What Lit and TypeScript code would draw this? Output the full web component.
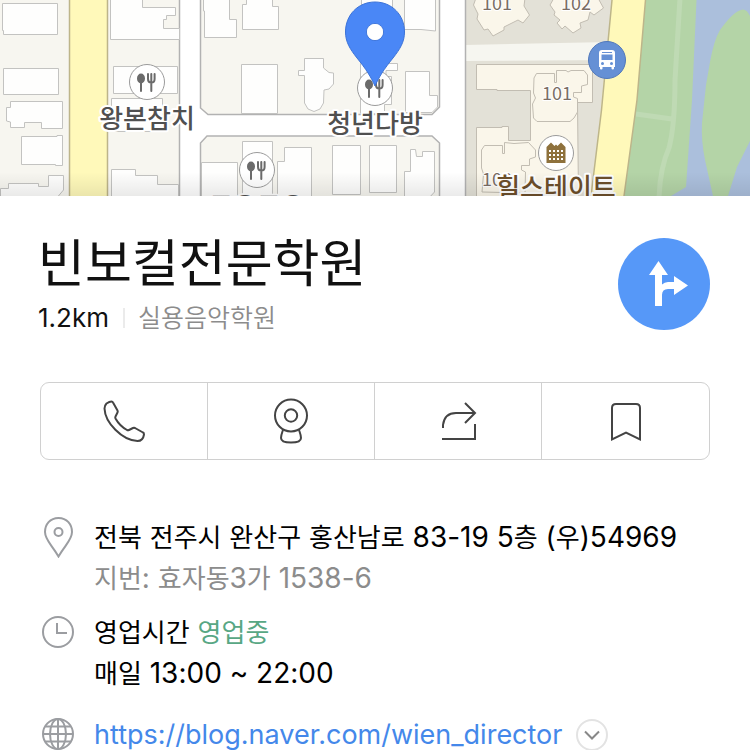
import { LitElement, html, css, svg } from "lit";
import { customElement } from "lit/decorators.js";

/* Footprints of the low buildings, as polygon point lists. */
const BUILDINGS: string[] = [
  "2.5,3.5 57.5,3.5 57.5,34.5 3.5,34.5 3.5,30.5 2.5,30.5",
  "3.5,68.5 58.5,68.5 58.5,94.5 3.5,94.5",
  "10.5,101.5 62.5,101.5 62.5,128.5 41.5,128.5 41.5,122.5 24.5,122.5 24.5,127.5 10.5,127.5 10.5,122 6.5,121 6.5,107.5 10.5,107.5",
  "21.5,136.5 57,136.5 57,135.5 62.5,135.5 62.5,165.5 55.5,165.5 55.5,164.5 21.5,164.5",
  "0.5,200 0.5,188.5 8.5,188.5 8.5,183.5 38.5,183.5 38.5,186.5 48.5,186.5 48.5,175.5 63.5,175.5 63.5,190 55,200",
  "110.5,-2 110.5,39.5 179.5,39.5 179.5,28.5 163.5,28.5 163.5,19.5 166.5,19.5 166.5,15.5 175.5,15.5 175.5,7.5 142.5,7.5 142.5,-2",
  "113.5,66.5 177.5,66.5 177.5,93.5 113.5,93.5",
  "111.5,98.5 162.5,98.5 162.5,131.5 111.5,131.5",
  "111.5,200 111.5,169.5 135.5,169.5 135.5,175.5 157.5,175.5 157.5,184.5 178.5,184.5 178.5,200",
  "203.5,-2 203.5,11 204.5,11 204.5,37.5 236.5,37.5 236.5,19.5 229.5,19.5 229.5,-2",
  "246.5,-2 246.5,4.5 242.5,4.5 242.5,29.5 278.5,29.5 278.5,6.5 272.5,6.5 272.5,-2",
  "241.5,64.5 277.5,64.5 277.5,113.5 241.5,113.5",
  "201.5,162.5 237.5,162.5 237.5,200 201.5,200",
  "242.5,141.5 272.5,141.5 272.5,200 242.5,200",
  "277.5,200 277.5,161.5 284.5,161.5 284.5,147.5 311.5,147.5 311.5,200",
  "332.5,145.5 360.5,145.5 360.5,194.5 332.5,194.5",
  "369.5,145.5 396.5,145.5 396.5,192.5 369.5,192.5",
  "404.5,200 404.5,171.5 410.5,171.5 410.5,149.5 415.5,149.5 416.5,156.5 422.5,156.5 422.5,151.5 434.5,151.5 434.5,192 427,200",
  "304.5,58.5 323.5,58.5 323.5,68 329,72.5 333.5,73 333.5,84 329,89 324,90 323.5,103 320,109 314,111.5 308,109 304.5,103 304.5,75.5 298.5,75.5 298.5,70.5 304.5,70.5",
  "361.5,-2 361.5,26.5 392.5,26.5 392.5,-2",
  "404.5,-2 404.5,29.5 421,29.5 435.5,31 435.5,-2",
  "360.5,113.5 360.5,63.5 397.5,63.5 397.5,70.5 386,70.5 386,76.5 391.5,76.5 391.5,104.5 384.5,104.5 384.5,113.5",
  "405.5,71.5 429.5,71.5 429.5,95.5 437.5,95.5 437.5,107 432,112.5 405.5,112.5",
];

/* Apartment complexes, drawn in the warmer tone. */
const APARTMENTS: string[] = [
  "476.5,64.5 592.5,64.5 592.5,102.5 577.5,102.5 578.5,200 476.5,200 476.5,127.5 502,127.5 502,126.5 508.5,126.5 508.5,140.5 530.5,140.5 530.5,90.5 497,90.5 497,89.5 476.5,89.5",
  "536.5,73.5 554.5,73.5 554.5,82.5 556.5,82.5 556.5,70.5 566,70.5 568,72 571,70.5 584,70.5 587.5,75 587.5,84.5 581.5,86 581.5,92.5 573.5,92.5 573.5,97 577.5,98.5 577.5,112 574,118 570,121.5 537,121.5 533.5,118 532.5,104 535.5,98 533.5,93 534,78",
  "484.5,145.5 502.5,145.5 502.5,153.5 504.5,153.5 504.5,142.5 514,143.5 528.5,142.5 535.5,150 535.5,157 529.5,159 529.5,165.5 521.5,165.5 521.5,170 525.5,172 525,193 482,192 483.5,174 481.5,168 481.5,150",
  "476,-2 473.5,5 478,14 477,19 484,30 488,29 493,36 504,30 504,27 518,20 523,23 529.5,15 524,6 525,-2",
  "554,-2 550,5 555,12 554,15 560,20 557,23 562,29 565,26 573,33 581,28 580,23 588,20 590,12 594,15 603.5,8 598,-2",
];

const foodMarker = (x: number, y: number) => svg`
  <g transform="translate(${x} ${y})">
    <circle class="spot" r="17.5" />
    <ellipse class="spoon" cx="-6" cy="-3.500" rx="4" ry="5" />
    <path class="fork" d="M-6 0V9M1-8V-3Q1 .500 4.300 .500T7.600-3V-8M4.300-8V9" />
  </g>`;

@customElement("place-map")
export class PlaceMap extends LitElement {
  static styles = css`
    :host { display: block; }
    svg { display: block; width: 100%; height: 196px; }
    .estate { fill: #e3e1d7; }
    .road { fill: #ffffff; }
    .lane { fill: #f6f6f0; }
    .avenue { fill: #fff9ba; }
    .curb { fill: none; stroke: #b2b2b2; stroke-width: 1.5; }
    .kerb { fill: none; stroke: #bdb58a; stroke-width: 1.5; }
    .ground { fill: #f7f6f0; }
    .building { fill: #fefefd; stroke: #c3c3c1; }
    .apartment { fill: #faf6ea; stroke: #c2bdb2; }
    .water { fill: #abbfdc; }
    .park { fill: #b4d4a7; }
    .trail { fill: none; stroke: #bfdab4; stroke-width: 5; }
    .spot { fill: #ffffff; stroke: #9b9b9b; }
    .spoon { fill: #6b6b6b; }
    .fork { fill: none; stroke: #6b6b6b; stroke-width: 2; stroke-linecap: round; }
    .bus { fill: #6590d5; stroke: #5078bb; }
    .glyph { fill: #ffffff; }
    .wheel { fill: #6590d5; }
    .tower { fill: #8e713c; }
    .pin { fill: #4a87f6; stroke: #3c73d8; }
    text { font-family: "Noto Sans CJK KR", sans-serif; text-anchor: middle; paint-order: stroke; stroke: #ffffff; stroke-width: 4px; stroke-linejoin: round; }
    .name { font-size: 26px; font-weight: 500; fill: #505050; }
    .estate-name { font-size: 26px; font-weight: 500; fill: #6d4f2b; }
    .block { font-size: 18px; fill: #7a6d64; stroke-width: 2px; }
  `;

  render() {
    return html`
      <svg viewBox="0 0 750 196" preserveAspectRatio="xMidYMid slice" role="img" aria-label="지도">
        <defs>
          <linearGradient id="shade" x1="0" y1="0" x2="0" y2="1">
            <stop offset="0" stop-color="#000" stop-opacity="0" />
            <stop offset="1" stop-color="#000" stop-opacity=".08" />
          </linearGradient>
        </defs>
        <rect class="ground" width="750" height="196" />
        <rect class="road" x="180" width="285" height="196" />
        <path class="curb ground" d="M200.500-2V108L208 114.500H432L439.500 107V-2Z" />
        <path class="curb ground" d="M200.500 200V143L207 136H432L439.500 143V200Z" />
        <path class="curb" d="M179.500 0V196" />
        <rect class="estate" x="465" width="180" height="196" />
        <path class="lane" d="M465 45L610 42V60L465 61Z" />
        <path class="curb" d="M465.500 0V196" />
        ${BUILDINGS.map((p) => svg`<polygon class="building" points=${p} />`)}
        ${APARTMENTS.map((p) => svg`<polygon class="apartment" points=${p} />`)}
        <rect class="avenue" x="69" width="39" height="196" />
        <path class="kerb" d="M69.500 0V196M107.500 0V196" />
        <path class="water" d="M640 0H750V196H620Z" />
        <path class="park" d="M645 0H696.500L692 100L686 187L671 196H623Z" />
        <path class="park" d="M741 10Q746 8 750 16V141L737 167L728 196H713L705 160Q701 140 702 123L706 85L710 62Q714 40 720 30Q733 12 741 10Z" />
        <path class="trail" d="M680-2L675 80Q675 125 669 148Q660 168 659 198M636 114L672 119" />
        <path class="avenue" d="M612 0H645.500L637 100L624 196H591L601 110Z" />
        <path class="kerb" d="M612 0L601.500 110L591 196M645.500 0L637 100L624 196" />

        <text class="block" x="497" y="10">101</text>
        <text class="block" x="576" y="10">102</text>
        <text class="block" x="557" y="100">101</text>
        <text class="block" x="497" y="186">108</text>

        ${foodMarker(147, 82)} ${foodMarker(257, 170)} ${foodMarker(375, 88)}
        <text class="name" x="147" y="128">왕본참치</text>
        <text class="name" x="375" y="133">청년다방</text>
        <text class="name" x="257" y="216">모으모으</text>

        <g transform="translate(556 153)">
          <circle class="spot" r="17.5" />
          <path class="tower" d="M-9.500 10V-6L-5-10.500L-1.500-7L0-8.500L1.500-7L5-10.500L9.500-6V10Z" />
          <path class="glyph" d="M-7-3h2v2h-2zM-3-3h2v2h-2zM1-3h2v2H1zM5-3h2v2H5zM-7 1h2v2h-2zM-3 1h2v2h-2zM1 1h2v2H1zM5 1h2v2H5zM-7 5h2v2h-2zM-3 5h2v2h-2zM1 5h2v2H1zM5 5h2v2H5z" />
        </g>
        <text class="estate-name" x="556" y="197">힐스테이트</text>

        <g transform="translate(607 60)">
          <circle class="bus" r="18.500" />
          <path class="glyph" fill-rule="evenodd" d="M-5-10H5Q8-10 8-7V7H7V8.500Q7 9.500 5.800 9.500T4.500 8.500V7H-4.500V8.500Q-4.500 9.500-5.800 9.500T-7 8.500V7H-8V-7Q-8-10-5-10ZM-5-8V-7H5V-8ZM-5.500-5.500V0H5.500V-5.500Z" />
          <circle class="wheel" cx="-4.500" cy="3.500" r="1.500" />
          <circle class="wheel" cx="4.500" cy="3.500" r="1.500" />
        </g>

        <path class="pin" fill-rule="evenodd" d="M375 2C358 2 345.500 15 345.500 32C345.500 42 350 49 357 58C366 69 371 77 375 86C379 77 384 69 393 58C400 49 404.500 42 404.500 32C404.500 15 392 2 375 2ZM375 23.500A8.500 8.500 0 1 1 375 40.500A8.500 8.500 0 1 1 375 23.500Z" />
        <circle class="glyph" cx="375" cy="32" r="8" />
        <rect fill="url(#shade)" y="172" width="750" height="24" />
      </svg>
    `;
  }
}

/* Sets Hangul runs a little smaller than the Latin letters and digits beside them. */
const mixed = (text: string) =>
  text
    .split(/([가-힣]+)/)
    .filter((part) => part !== "")
    .map((part) => (/[가-힣]/.test(part) ? html`<span class="ko">${part}</span>` : part));

@customElement("app-root")
export class AppRoot extends LitElement {
  static styles = css`
    :host {
      display: block;
      height: 100vh;
      overflow: hidden;
      background: #ffffff;
      color: #111111;
      font-family: Inter, "Noto Sans CJK KR", sans-serif;
    }
    button { margin: 0; padding: 0; border: 0; background: none; font: inherit; color: inherit; cursor: pointer; }
    svg { display: block; fill: none; }
    .sheet { padding: 30px 40px 0; }
    .head { display: flex; justify-content: space-between; align-items: flex-start; margin-left: -2px; }
    h1 { margin: 0; font-family: "Noto Sans CJK KR", sans-serif; font-size: 51px; line-height: 68px; font-weight: 400; }
    .meta { display: flex; align-items: center; margin: 0; font-size: 26px; line-height: 48px; }
    .kind { margin-left: 14px; padding-left: 13px; border-left: 2px solid #ebebeb; line-height: 20px; font-size: 25px; font-weight: 350; color: #8c8c8c; }
    .route { flex: none; width: 92px; height: 92px; margin-top: 12px; border-radius: 50%; background: #5698f8; }
    .actions { display: grid; grid-template-columns: repeat(4, 1fr); margin-top: 40px; border: 1px solid #d0d0d0; border-radius: 9px; }
    .actions button { display: flex; justify-content: center; align-items: center; height: 76px; border-right: 1px solid #d0d0d0; }
    .actions button:last-child { border-right: 0; }
    .actions svg { stroke: #444444; stroke-width: 2; }
    .info { display: flex; flex-direction: column; margin-top: 57px; font-size: 28px; line-height: 41px; color: #000000; }
    .row { display: grid; grid-template-columns: 36px 1fr; column-gap: 18px; align-items: start; margin-bottom: 13px; }
    .row.last { margin-top: 7px; }
    .row > svg { stroke: #9b9da1; stroke-width: 2; }
    p { margin: 0; }
    .ko { font-size: 26px; }
    .sub { color: #8c8c8c; }
    .open { color: #58a784; }
    .site { display: flex; align-items: center; gap: 14px; }
    a { color: #4488ea; text-decoration: none; font-size: 27px; }
    .more { display: flex; justify-content: center; align-items: center; width: 32px; height: 32px; border: 2px solid #e3e3e3; border-radius: 50%; box-sizing: border-box; }
    .more svg { stroke: #888888; stroke-width: 2; }
  `;

  render() {
    return html`
      <place-map></place-map>
      <main class="sheet">
        <header class="head">
          <div>
            <h1>빈보컬전문학원</h1>
            <p class="meta"><span>1.2km</span><span class="kind">실용음악학원</span></p>
          </div>
          <button class="route" aria-label="길찾기">
            <svg width="92" height="92" viewBox="0 0 92 92">
              <path fill="#fff" d="M40.500 23L50 37H44V46.500Q46.500 44 50 44H56V38L70 47.500L56 57V51H50Q44 51 44 57V68H37V37H31Z" />
            </svg>
          </button>
        </header>

        <nav class="actions" aria-label="장소 메뉴">
          <button aria-label="전화">
            <svg width="44" height="44" viewBox="0 0 44 44" stroke-linejoin="round">
              <path d="M4.500 4.500Q7.500 2.500 9.500 2.500Q10.500 2.500 11 3.500L15.500 11.500Q16 12.500 15.500 13.500L13.500 17.500Q13 18.500 13.500 19.500C16 24 20.500 28.500 25 31Q26 31.500 27 31L31 29Q32 28.500 33 29L41 33.500Q42 34 42 35.500Q41 42 35.500 42C20 41.500 3 23.500 2.500 9.500Q2.500 6.500 4.500 4.500Z" />
            </svg>
          </button>
          <button aria-label="거리뷰">
            <svg width="44" height="46" viewBox="0 0 44 46">
              <circle cx="22" cy="17.500" r="16" />
              <circle cx="22" cy="17.500" r="6.200" />
              <path d="M14 32C13 35 12 37 12 40C12 43 16 44.500 22 44.500S32 43 32 40C32 37 31 35 30 32" />
            </svg>
          </button>
          <button aria-label="공유">
            <svg width="44" height="44" viewBox="0 0 44 44">
              <path d="M7 29V26Q8.500 14 20 14H39M29 4L39 14L29 24M6 40H39V25" />
            </svg>
          </button>
          <button aria-label="저장">
            <svg width="44" height="44" viewBox="0 0 44 44">
              <path d="M8 40.500V9Q8 5 12 5H32Q36 5 36 9V40.500L22 33.500Z" />
            </svg>
          </button>
        </nav>

        <section class="info">
          <div class="row">
            <svg width="36" height="41" viewBox="0 0 36 41">
              <path d="M18.500 1C10 1 5 7.500 5 15C5 23 12 28 18.500 39.500C25 28 32 23 32 15C32 7.500 27 1 18.500 1Z" />
              <circle cx="18.500" cy="15" r="4" />
            </svg>
            <div>
              <p>${mixed("전북 전주시 완산구 홍산남로 83-19 5층 (우)54969")}</p>
              <p class="sub">${mixed("지번: 효자동3가 1538-6")}</p>
            </div>
          </div>
          <div class="row">
            <svg width="36" height="41" viewBox="0 0 36 41">
              <circle cx="18" cy="20" r="15" />
              <path d="M17 11V21H27" />
            </svg>
            <div>
              <p>${mixed("영업시간 ")}<span class="open">${mixed("영업중")}</span></p>
              <p>${mixed("매일 13:00 ~ 22:00")}</p>
            </div>
          </div>
          <div class="row last">
            <svg width="36" height="41" viewBox="0 0 36 41">
              <circle cx="18" cy="20" r="15" />
              <ellipse cx="18" cy="20" rx="8" ry="15" />
              <path d="M18 5V35M3 20H33M5.500 12.500H30.500M5.500 27.500H30.500" />
            </svg>
            <div class="site">
              <a href="https://blog.naver.com/wien_director">https://blog.naver.com/wien_director</a>
              <button class="more" aria-label="더보기">
                <svg width="16" height="10" viewBox="0 0 16 10"><path d="M1 1.500L8 8.500L15 1.500" /></svg>
              </button>
            </div>
          </div>
        </section>
      </main>
    `;
  }
}
